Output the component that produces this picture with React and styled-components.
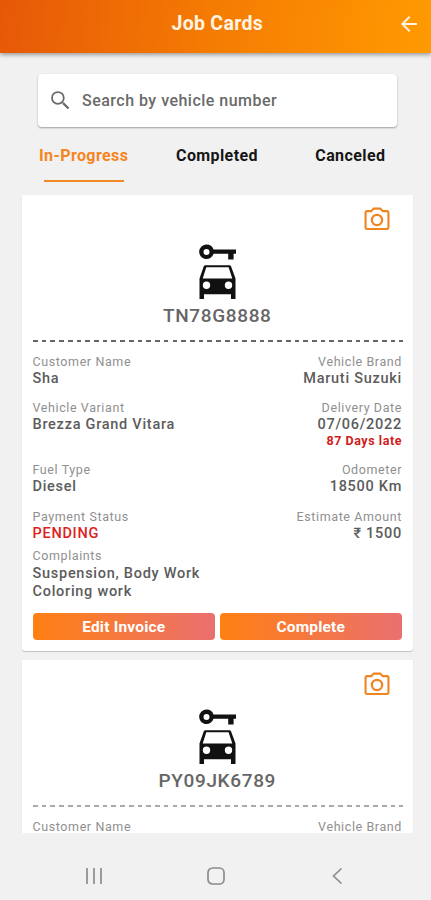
import React from "react";
import styled, { createGlobalStyle, css } from "styled-components";

const jobs = [
  {
    plate: "TN78G8888",
    line: "#666",
    rows: [
      {
        height: 46,
        left: { label: "Customer Name", value: "Sha" },
        right: { label: "Vehicle Brand", value: "Maruti Suzuki" },
      },
      {
        height: 62,
        left: { label: "Vehicle Variant", value: "Brezza Grand Vitara" },
        right: { label: "Delivery Date", value: "07/06/2022", note: "87 Days late" },
      },
      {
        height: 47,
        left: { label: "Fuel Type", value: "Diesel" },
        right: { label: "Odometer", value: "18500 Km" },
      },
      {
        height: 39,
        left: { label: "Payment Status", value: "PENDING", danger: true },
        right: { label: "Estimate Amount", value: "₹ 1500" },
      },
    ],
    complaints: ["Suspension, Body Work", "Coloring work"],
  },
  {
    plate: "PY09JK6789",
    line: "#aaa",
    rows: [
      {
        height: 15,
        left: { label: "Customer Name" },
        right: { label: "Vehicle Brand" },
      },
    ],
  },
];

const tabs = ["In-Progress", "Completed", "Canceled"];

const BackIcon = () => (
  <svg width="24" height="24" viewBox="0 0 24 24" fill="#fff4e4">
    <path d="M20 11H7.83l5.59-5.59L12 4l-8 8 8 8 1.41-1.41L7.83 13H20v-2z" />
  </svg>
);

const SearchIcon = () => (
  <svg width="25" height="25" viewBox="0 0 24 24" fill="#6a6a6a">
    <path d="M15.5 14h-.79l-.28-.27A6.47 6.47 0 0 0 16 9.5 6.5 6.5 0 1 0 9.5 16c1.61 0 3.09-.59 4.23-1.57l.27.28v.79l5 4.99L20.49 19l-4.99-5zm-6 .3a4.8 4.8 0 1 1 0-9.6 4.8 4.8 0 0 1 0 9.6z" />
  </svg>
);

const CameraIcon = () => (
  <svg width="30" height="30" viewBox="0 0 24 24" fill="#f08421">
    <path d="M20 4h-3.17L15 2H9L7.17 4H4c-1.1 0-2 .9-2 2v12c0 1.1.9 2 2 2h16c1.1 0 2-.9 2-2V6c0-1.1-.9-2-2-2zm.3 14.3H3.7V5.7h4.05l1.83-2h4.84l1.83 2h4.05v12.6zM12 7a5 5 0 1 0 0 10 5 5 0 0 0 0-10zm0 8.2a3.2 3.2 0 1 1 0-6.4 3.2 3.2 0 0 1 0 6.4z" />
  </svg>
);

const CarKeyIcon = () => (
  <svg width="37" height="56" viewBox="0 0 37 56" fill="#111">
    <path
      fillRule="evenodd"
      d="M7.5.5a7.3 7.3 0 0 1 7 5.1H37v4.2h-2.4v5.7h-5.4V9.8H14.5A7.3 7.3 0 1 1 7.5.5zm0 4.4a3 3 0 1 0 0 6 3 3 0 0 0 0-6z"
    />
    <path
      fillRule="evenodd"
      d="M6.6 21.2h23.6c1 0 1.7.5 2 1.5L36.5 34.5V55H32v-4.8H5V55H.5V34.5L4.6 22.7c.3-1 1-1.5 2-1.5zM7.3 23.3L3.7 34.4h29.6L29.6 23.3zM7.5 37.5a3.7 3.7 0 1 0 0 7.4 3.7 3.7 0 0 0 0-7.4zm22 0a3.7 3.7 0 1 0 0 7.4 3.7 3.7 0 0 0 0-7.4z"
    />
  </svg>
);

const Field = ({ label, value, note, end, danger }) => (
  <FieldBox $end={end}>
    <Label>{label}</Label>
    {value && <Value $danger={danger}>{value}</Value>}
    {note && <Note>{note}</Note>}
  </FieldBox>
);

const JobCard = ({ job: { plate, line, rows, complaints } }) => (
  <Card>
    <CameraRow>
      <CameraIcon />
    </CameraRow>
    <Vehicle>
      <CarKeyIcon />
      <Plate>{plate}</Plate>
    </Vehicle>
    <Dashes $color={line} />
    <Details>
      {rows.map(({ height, left, right }) => (
        <Row key={left.label} $height={height}>
          <Field {...left} />
          <Field {...right} end />
        </Row>
      ))}
      {complaints && (
        <Complaints>
          <Label>Complaints</Label>
          {complaints.map((item) => (
            <Complaint key={item}>{item}</Complaint>
          ))}
        </Complaints>
      )}
    </Details>
    {complaints && (
      <Actions>
        <Button>Edit Invoice</Button>
        <Button>Complete</Button>
      </Actions>
    )}
  </Card>
);

export default function App() {
  return (
    <Screen>
      <GlobalStyle />
      <Header>
        <span />
        <Title>Job Cards</Title>
        <BackIcon />
      </Header>
      <Search>
        <SearchIcon />
        <Placeholder>Search by vehicle number</Placeholder>
      </Search>
      <Tabs>
        {tabs.map((tab, i) => (
          <Tab key={tab} $active={i === 0}>
            {tab}
          </Tab>
        ))}
      </Tabs>
      <List>
        {jobs.map((job) => (
          <JobCard key={job.plate} job={job} />
        ))}
      </List>
      <NavBar>
        <svg width="18" height="18" viewBox="0 0 18 18" stroke="#8c8c8c" strokeWidth="1.7">
          <path d="M2 1v16M9 1v16M16 1v16" />
        </svg>
        <svg width="18" height="18" viewBox="0 0 18 18" fill="none" stroke="#8c8c8c" strokeWidth="1.7">
          <rect x="1" y="1" width="16" height="16" rx="4.5" />
        </svg>
        <svg width="18" height="18" viewBox="0 0 18 18" fill="none" stroke="#8c8c8c" strokeWidth="1.7">
          <path d="M13.5 1.5L5.500 9l8 7.500" />
        </svg>
      </NavBar>
    </Screen>
  );
}

const GlobalStyle = createGlobalStyle`
  * {
    box-sizing: border-box;
  }

  body {
    margin: 0;
    background: #f1f1f1;
    font-family: Roboto, "Noto Sans", sans-serif;
  }

  svg {
    display: block;
    flex-shrink: 0;
  }
`;

const Screen = styled.div`
  display: flex;
  flex-direction: column;
  height: 900px;
  overflow: hidden;
`;

const Header = styled.header`
  display: grid;
  grid-template-columns: 24px 1fr 24px;
  align-items: center;
  flex-shrink: 0;
  height: 53px;
  padding: 0 10.5px 5px 14px;
  background: linear-gradient(97deg, #e65807 0%, #f57c03 50%, #ff9a00 100%);
  box-shadow: 0 2px 4px rgba(0, 0, 0, 0.35);
`;

const Title = styled.h1`
  margin: -1px 0 0;
  text-align: center;
  color: #fff4e4;
  font-size: 19.5px;
  font-weight: 700;
  letter-spacing: 0.3px;
`;

const Search = styled.div`
  display: flex;
  align-items: center;
  flex-shrink: 0;
  gap: 9px;
  height: 53px;
  margin: 21px 34px 0 38px;
  padding-left: 10px;
  border-radius: 4px;
  background: #fff;
  box-shadow: 0 1px 2px rgba(0, 0, 0, 0.35);
`;

const Placeholder = styled.span`
  color: #6a6a6a;
  font-size: 16px;
  font-weight: 500;
  letter-spacing: 0.48px;
`;

const Tabs = styled.nav`
  display: grid;
  grid-template-columns: repeat(3, 1fr);
  flex-shrink: 0;
  height: 68px;
  margin: 0 14px 0 17px;
`;

const Tab = styled.div`
  display: flex;
  flex-direction: column;
  align-items: center;
  padding-top: 19px;
  color: ${(p) => (p.$active ? "#f5851f" : "#161616")};
  font-size: 16px;
  font-weight: 700;
  line-height: 20px;
  letter-spacing: 0.4px;

  ${(p) =>
    p.$active &&
    css`
      &::after {
        content: "";
        width: 80px;
        height: 2px;
        margin-top: 14px;
        background: #f08a24;
      }
    `}
`;

const List = styled.main`
  display: flex;
  flex-direction: column;
  flex: 1;
  gap: 8.5px;
  min-height: 0;
  padding: 0 18px 0 22px;
  overflow: hidden;
`;

const Card = styled.article`
  flex-shrink: 0;
  padding: 10px 11px 11px 10.5px;
  border-radius: 0 0 3px 3px;
  background: #fff;
  box-shadow: 0 1px 1px rgba(0, 0, 0, 0.2);
`;

const CameraRow = styled.div`
  display: flex;
  justify-content: flex-end;
  height: 39px;
  padding-right: 10.5px;
`;

const Vehicle = styled.div`
  display: flex;
  flex-direction: column;
  align-items: center;
`;

const Plate = styled.div`
  margin-top: 5px;
  color: #666;
  font-size: 19px;
  font-weight: 500;
  line-height: 22px;
  letter-spacing: 0.65px;
`;

const Dashes = styled.div`
  height: 2px;
  margin: 13px -1px 0 0;
  background: repeating-linear-gradient(
    90deg,
    ${(p) => p.$color} 0 4.7px,
    transparent 4.7px 8.72px
  );
`;

const Details = styled.div`
  margin-top: 11px;
`;

const Row = styled.div`
  display: flex;
  justify-content: space-between;
  height: ${(p) => p.$height}px;
`;

const FieldBox = styled.div`
  text-align: ${(p) => (p.$end ? "right" : "left")};
`;

const Label = styled.div`
  color: #8f8f8f;
  font-size: 12.5px;
  line-height: 17px;
  letter-spacing: 0.6px;
`;

const Value = styled.div`
  color: ${(p) => (p.$danger ? "#dc2020" : "#5c5c5c")};
  font-size: 14.5px;
  font-weight: 500;
  line-height: 17px;
  letter-spacing: 0.73px;
`;

const Complaints = styled.div`
  display: flow-root;
`;

const Complaint = styled(Value)`
  line-height: 18px;

  ${Label} + & {
    margin-top: 1px;
  }
`;

const Note = styled.div`
  color: #cf1c1c;
  font-size: 12.5px;
  font-weight: 700;
  line-height: 16px;
  letter-spacing: 0.55px;
`;

const Actions = styled.div`
  display: grid;
  grid-template-columns: 1fr 1fr;
  gap: 4.5px;
  margin-top: 12px;
`;

const Button = styled.button`
  height: 27px;
  padding: 0;
  border: 0;
  border-radius: 4px;
  background: linear-gradient(90deg, #ff8012, #ea7070);
  color: #fff;
  font-family: inherit;
  font-size: 15.5px;
  font-weight: 700;
  letter-spacing: 0.2px;
`;

const NavBar = styled.footer`
  display: flex;
  align-items: center;
  justify-content: space-between;
  flex-shrink: 0;
  height: 67px;
  padding: 18px 85px 0;
`;
